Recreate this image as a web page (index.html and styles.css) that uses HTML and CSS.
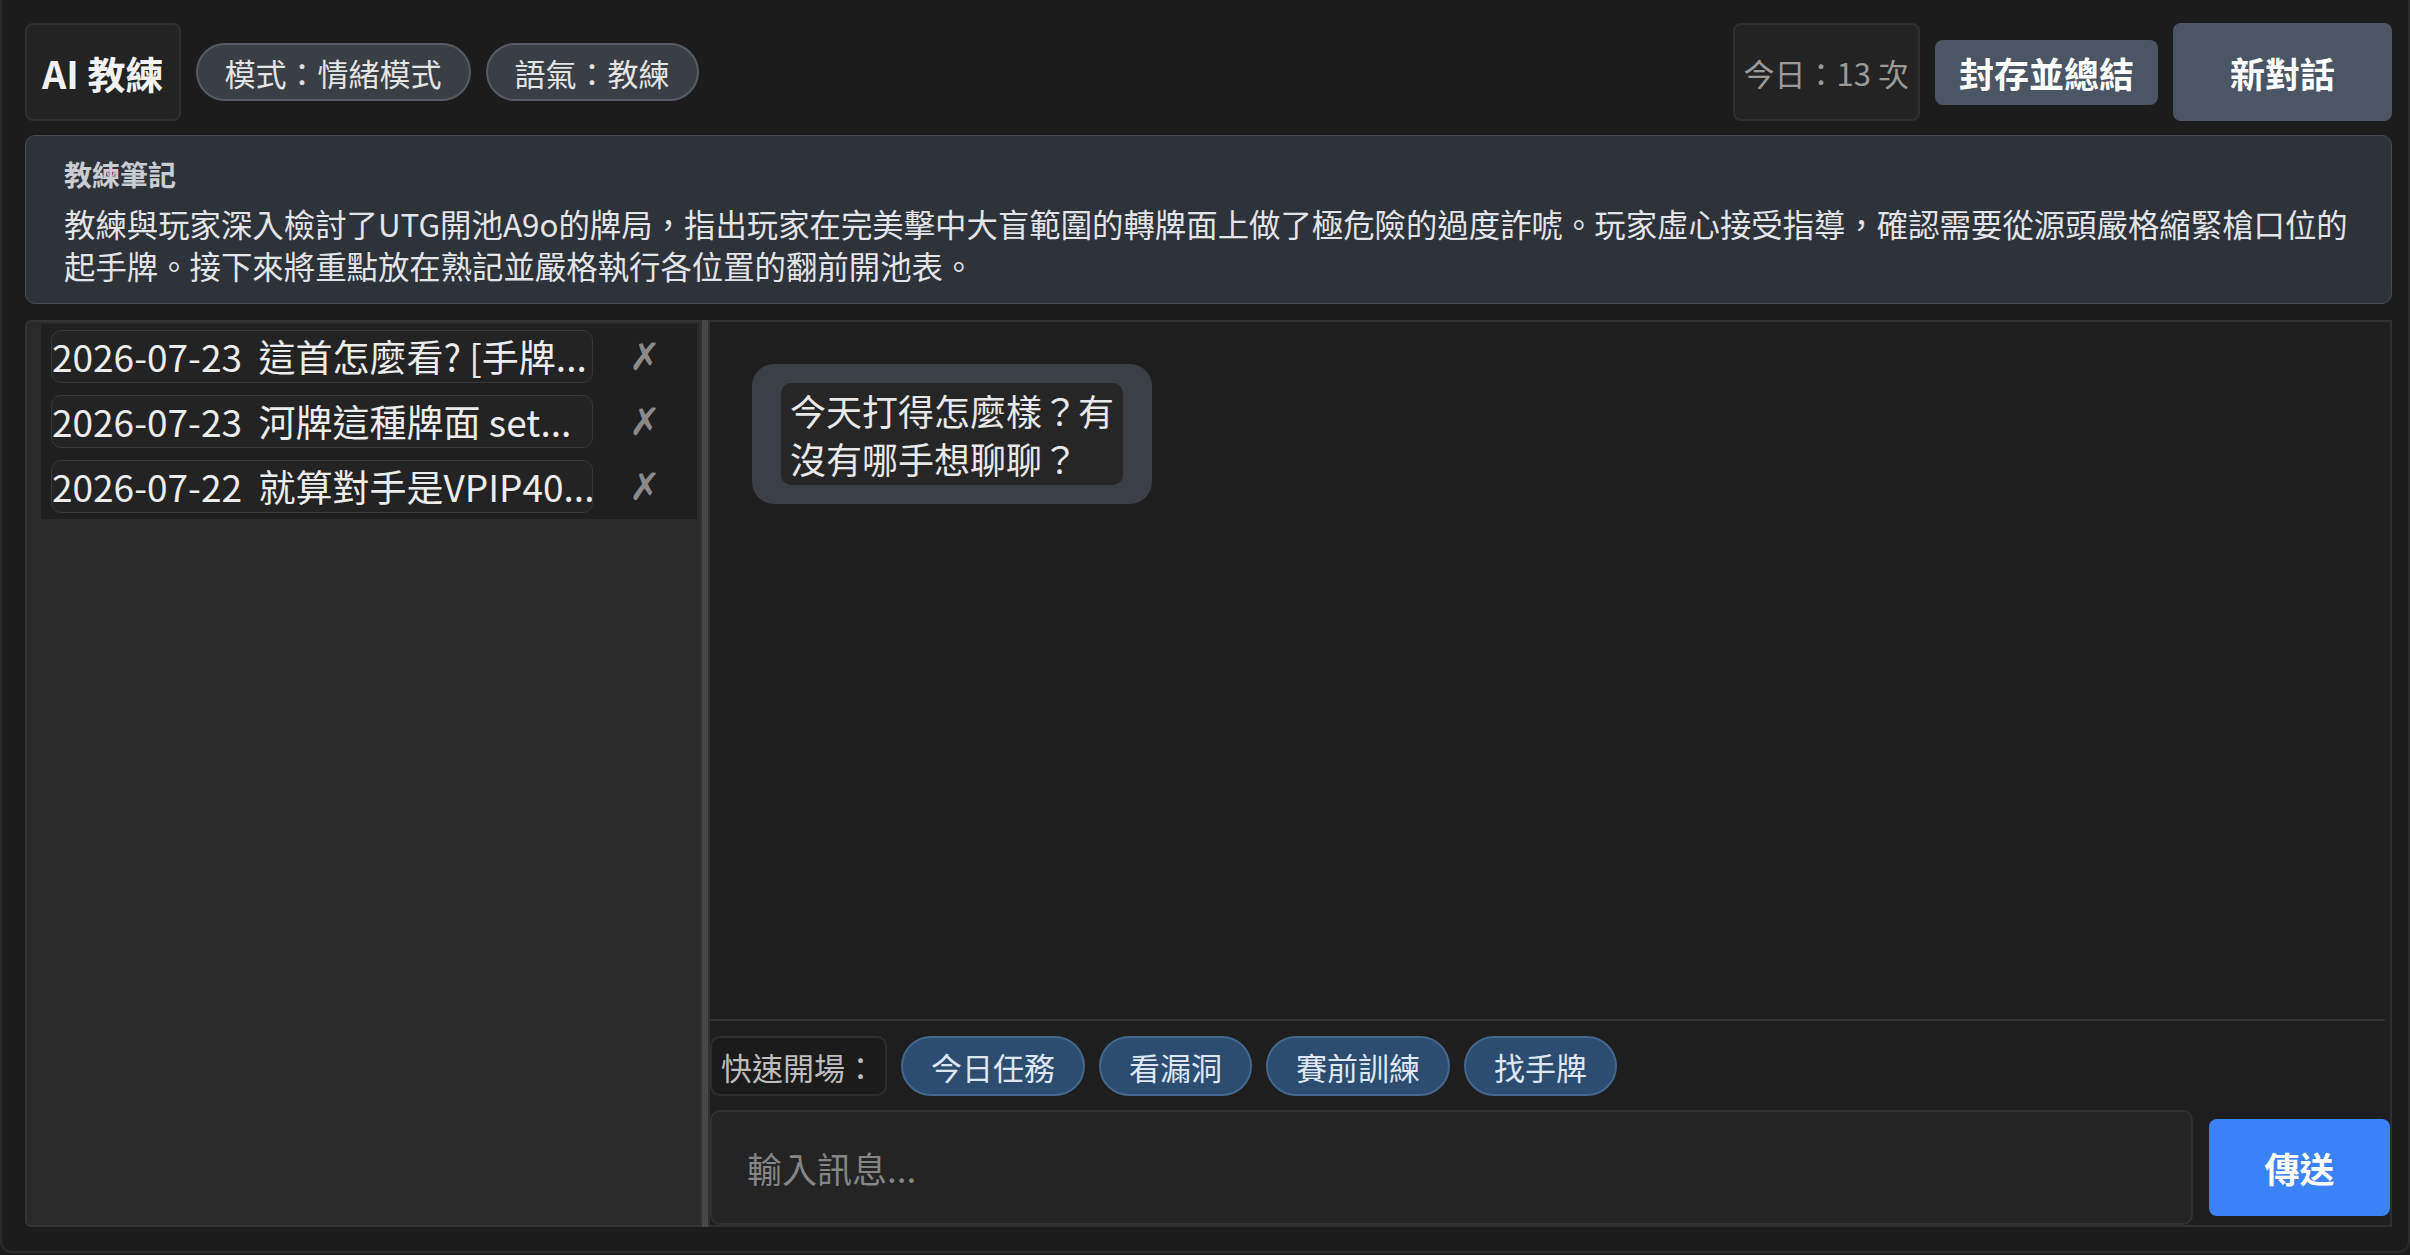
FILE: index.html
```html
<!DOCTYPE html>
<html lang="zh-Hant">
<head>
    <meta charset="UTF-8">
    <title>AI 教練</title>

    <link rel="stylesheet" href="styles.css">
</head>
<body>

<div class="app">

    <header class="topbar">
        <div class="brand">AI 教練</div>
        <span class="tag">模式：情緒模式</span>
        <span class="tag">語氣：教練</span>
        <div class="spacer"></div>
        <div class="counter">今日：13 次</div>
        <button class="btn btn-archive">封存並總結</button>
        <button class="btn btn-new">新對話</button>
    </header>

    <section class="notes">
        <h3>教練筆記</h3>
        <p>教練與玩家深入檢討了UTG開池A9o的牌局，指出玩家在完美擊中大盲範圍的轉牌面上做了極危險的過度詐唬。玩家虛心接受指導，確認需要從源頭嚴格縮緊槍口位的起手牌。接下來將重點放在熟記並嚴格執行各位置的翻前開池表。</p>
    </section>

    <main class="workspace">

        <aside class="sessions">
            <ul class="session-list">
                <li>
                    <span class="session-title">2026-07-23&nbsp;&nbsp;這首怎麼看? [手牌...</span>
                    <button class="del">✗</button>
                </li>
                <li>
                    <span class="session-title">2026-07-23&nbsp;&nbsp;河牌這種牌面 set...</span>
                    <button class="del">✗</button>
                </li>
                <li>
                    <span class="session-title">2026-07-22&nbsp;&nbsp;就算對手是VPIP40...</span>
                    <button class="del">✗</button>
                </li>
            </ul>
        </aside>

        <div class="splitter"></div>

        <section class="chat">
            <div class="messages">
                <div class="bubble">
                    <p>今天打得怎麼樣？有沒有哪手想聊聊？</p>
                </div>
            </div>

            <div class="quick">
                <span class="quick-label">快速開場：</span>
                <button class="chip">今日任務</button>
                <button class="chip">看漏洞</button>
                <button class="chip">賽前訓練</button>
                <button class="chip">找手牌</button>
            </div>

            <div class="composer">
                <input type="text" placeholder="輸入訊息...">
                <button class="send">傳送</button>
            </div>
        </section>

    </main>

</div>

</body>
</html>
```

FILE: styles.css
```css
* {
    box-sizing: border-box;
}

html, body {
    margin: 0;
    padding: 0;
    height: 100%;
}

body {
    background: #1c1c1c;
    color: #e6e6e6;
    font-family: "Noto Sans CJK TC", "Noto Sans", sans-serif;
    overflow: hidden;
}

button, input {
    font-family: "Noto Sans CJK TC", "Noto Sans", sans-serif;
}

.app {
    height: 1253px;
    padding: 23px 16px 0 23px;
    border: 2px solid #2a2a2a;
    border-top: none;
    border-radius: 0 0 12px 12px;
    display: flex;
    flex-direction: column;
}

/* top bar */

.topbar {
    display: flex;
    align-items: center;
    gap: 15px;
    height: 98px;
    flex: none;
}

.brand {
    height: 98px;
    padding: 0 15px;
    display: flex;
    align-items: center;
    background: #232323;
    border: 2px solid #2f2f2f;
    border-radius: 8px;
    font-size: 38px;
    font-weight: 700;
    color: #f2f2f2;
}

.tag {
    height: 58px;
    padding: 0 27px;
    display: flex;
    align-items: center;
    border-radius: 29px;
    background: #3a3f46;
    border: 2px solid #565c65;
    font-size: 31px;
    color: #e4e4e4;
}

.spacer {
    flex: 1;
}

.counter {
    height: 98px;
    padding: 0 9px;
    display: flex;
    align-items: center;
    background: #232323;
    border: 2px solid #2f2f2f;
    border-radius: 8px;
    font-size: 31px;
    color: #9a9a9a;
}

.btn {
    border: none;
    border-radius: 8px;
    background: #4b5563;
    color: #fff;
    font-size: 35px;
    font-weight: 700;
}

.btn-archive {
    height: 65px;
    padding: 0 24px;
}

.btn-new {
    height: 98px;
    padding: 0 57px;
}

/* coach notes */

.notes {
    flex: none;
    margin-top: 14px;
    background: #2e3239;
    border: 1px solid #474c54;
    border-radius: 10px;
    padding: 20px 40px 16px 38px;
}

.notes h3 {
    margin: 0 0 11px;
    font-size: 28px;
    line-height: 36px;
    font-weight: 700;
    color: #c9ccd1;
}

.notes p {
    margin: 0;
    font-size: 31.4px;
    line-height: 42px;
    color: #e2e4e7;
}

/* main area */

.workspace {
    flex: none;
    margin-top: 16px;
    height: 907px;
    display: grid;
    grid-template-columns: 675px 10px 1fr;
}

.sessions {
    background: #2a2a2a;
    border: 2px solid #343434;
    border-right: none;
    border-radius: 6px 0 0 6px;
    padding: 2px 3px 0 14px;
}

.session-list {
    list-style: none;
    margin: 0;
    padding: 6px 0 6px 10px;
    background: #1f1f1f;
    display: flex;
    flex-direction: column;
    gap: 12px;
}

.session-list li {
    display: flex;
    align-items: center;
}

.session-title {
    width: 542px;
    height: 53px;
    line-height: 51px;
    border: 1px solid #383838;
    border-radius: 10px;
    background: #232323;
    font-size: 37px;
    white-space: nowrap;
    overflow: hidden;
    color: #ececec;
}

.del {
    flex: 1;
    background: none;
    border: none;
    color: #8a8a8a;
    font-family: "DejaVu Sans", sans-serif;
    font-size: 38px;
    text-align: center;
    padding: 0;
}

.splitter {
    background: #474747;
    border-left: 2px solid #303030;
    border-right: 2px solid #303030;
}

/* chat */

.chat {
    display: flex;
    flex-direction: column;
    background: #1e1e1e;
    border: 2px solid #2f2f2f;
    border-left: none;
}

.messages {
    flex: 1;
    padding: 42px;
    margin-right: 5px;
    border-bottom: 2px solid #333;
}

.bubble {
    display: inline-block;
    background: #3b4047;
    border-radius: 22px;
    padding: 19px 29px;
}

.bubble p {
    margin: 0;
    width: 342px;
    padding: 3px 9px;
    background: #262626;
    border-radius: 10px;
    font-size: 36px;
    line-height: 48px;
    color: #e8e8e8;
}

.quick {
    flex: none;
    display: flex;
    gap: 14px;
    height: 60px;
    margin-top: 15px;
}

.quick-label {
    display: flex;
    align-items: center;
    padding: 0 9px;
    background: #1b1b1b;
    border: 2px solid #2e2e2e;
    border-radius: 10px;
    font-size: 31px;
    color: #bdbdbd;
}

.chip {
    padding: 0 28px;
    border-radius: 30px;
    background: #2c4d70;
    border: 2px solid #44678f;
    color: #dde7f3;
    font-size: 31px;
}

.composer {
    flex: none;
    display: flex;
    align-items: center;
    gap: 16px;
    height: 115px;
    margin-top: 14px;
}

.composer input {
    flex: 1;
    height: 100%;
    background: #242424;
    border: 2px solid #303030;
    border-radius: 10px;
    padding: 0 35px;
    font-size: 35px;
    color: #eee;
    outline: none;
}

.composer input::placeholder {
    color: #858585;
}

.send {
    width: 181px;
    height: 97px;
    background: #3b82f6;
    border: none;
    border-radius: 8px;
    color: #fff;
    font-size: 35px;
    font-weight: 700;
}
```
